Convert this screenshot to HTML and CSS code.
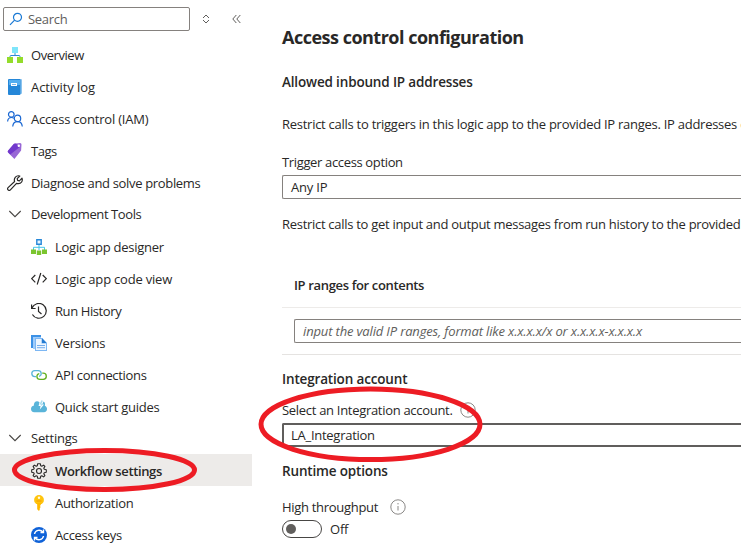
FILE: index.html
```
<!DOCTYPE html>
<html lang="en">
<head>
<meta charset="utf-8">
<title>Workflow settings</title>
<link rel="stylesheet" href="styles.css">
</head>
<body>
<div class="app">
  <aside class="sidebar">
    <div class="toolbar">
      <div class="search">
        <svg width="14" height="14" viewBox="0 0 14 14" fill="none" stroke="#1979d4" stroke-width="1.2"><circle cx="8.5" cy="5.3" r="4"/><path d="M5.6 8.2 1 12.8"/></svg>
        <span>Search</span>
      </div>
      <svg class="sort" width="8" height="10" viewBox="0 0 8 10" fill="none" stroke="#605e5c"><path d="M1 4 4 1l3 3M1 6l3 3 3-3"/></svg>
      <svg class="collapse" width="9" height="10" viewBox="0 0 9 10" fill="none" stroke="#605e5c"><path d="M4.3 1 .8 5l3.5 4M8.3 1 4.8 5l3.5 4"/></svg>
    </div>
    <nav class="menu">
      <div class="item"><svg class="icon" viewBox="0 0 16 16"><path d="M8 6v2.5M3 11V9.5Q3 8.5 4 8.5h8q1 0 1 1V11" fill="none" stroke="#2e8ad8"/><path fill="#7ee5fa" d="M5 0h6v6H5z"/><path fill="#94dc2b" d="M0 10h6v6H0zM10 10h6v6h-6z"/></svg><span class="t-overview">Overview</span></div>
      <div class="item"><svg class="icon" viewBox="0 0 16 16"><rect x="3" width="12" height="15" rx="1" fill="#8cc4ef"/><rect x="1" y="0" width="12.5" height="16" rx="1" fill="#2587d8"/><path fill="#54aef0" d="M2 1h11v5H2z"/><path fill="#fff" d="M4 4h6v3H4z"/><path d="M5 5.5h4" stroke="#77b7eb"/></svg><span class="t-activity">Activity log</span></div>
      <div class="item"><svg class="icon" viewBox="0 0 16 16" fill="none" stroke="#1a67d2" stroke-width="1.2"><circle cx="4.3" cy="3.4" r="2.8"/><path d="M.6 10.5C.8 7.8 2.3 6.5 4.5 6.5q1.4 0 2.4.8"/><circle cx="10.5" cy="7.4" r="3.2"/><path d="M5.7 15.5c.3-3 2.1-4.8 4.8-4.8s4.5 1.8 4.8 4.8"/></svg><span class="t-iam">Access control (IAM)</span></div>
      <div class="item"><svg class="icon" viewBox="0 0 16 16"><path fill="#9867d5" d="M7 .8 13 0q1.6 0 1.5 1.5l-.4 6L7.4 16 1 9.5q-.8-1 .2-2z"/><path fill="#7138cc" d="M7 .8 9 .5l3.5 3.8L3.2 11.5 1 9.2q-.6-.8.2-1.7z"/><circle cx="11.8" cy="2.8" r="1.2" fill="#fff"/></svg><span class="t-tags">Tags</span></div>
      <div class="item"><svg class="icon" viewBox="0 0 16 16" fill="none" stroke="#292827" stroke-width="1.2" stroke-linejoin="round"><path d="M12.8 1 10.2 3.6l.4 1.8 1.8.4L15 3.2c1 2.7-.7 5.5-3.7 5.5-.7 0-1.2-.1-1.8-.3L3.4 14.9c-1.6 1.6-3.9-.8-2.3-2.3l6.5-6.1C6.5 3.1 9.2-.1 12.8 1z"/></svg><span class="t-diagnose">Diagnose and solve problems</span></div>
      <div class="item group"><svg class="icon" viewBox="0 0 16 16" fill="none" stroke="#484644" stroke-width="1.1"><path d="m2.3 5 5.7 5.7L13.7 5"/></svg><span class="t-dev">Development Tools</span></div>
      <div class="item sub"><svg class="icon" viewBox="0 0 16 16"><path d="M8 5v6M2.5 11V8.3h11V11" fill="none" stroke="#45c6e9"/><path d="M5.8.8h4.4v4.4H5.8z" fill="#e9f6ff" stroke="#2788d9" stroke-width="1.4"/><path fill="#7bc52f" d="M0 10.5h5V15H0zM5.8 11.5h4.4V16H5.8zM11 10.5h5V15h-5z"/></svg><span class="t-designer">Logic app designer</span></div>
      <div class="item sub"><svg class="icon" viewBox="0 0 16 16" fill="none" stroke="#292827" stroke-width="1.2"><path d="M4.3 4 .7 7.7l3.6 3.7M11.7 4l3.6 3.7-3.6 3.7M9.8 2 6.2 13.5"/></svg><span class="t-code">Logic app code view</span></div>
      <div class="item sub"><svg class="icon" viewBox="0 0 16 16" fill="none" stroke="#292827" stroke-width="1.2"><path d="M.6 1.5v4h4M1 5A7.4 7.4 0 1 1 1.4 11.5M7.5 3.5v5l3 2.5"/></svg><span class="t-run">Run History</span></div>
      <div class="item sub"><svg class="icon" viewBox="0 0 16 16"><path fill="#3c91e6" d="M0 0h10v13H0z"/><path fill="#a0ccfa" d="M2 2h8v12H2z"/><path fill="#7db7f3" d="M4 3h7l5 5v8H4z"/><path fill="#edf6ff" d="M5 4h5.5v4.5H15V15H5z"/><path fill="#247bd1" d="m11 3 4.5 5H11z"/><path d="M6 10.5h8M6 12.7h8" stroke="#75adec"/></svg><span class="t-versions">Versions</span></div>
      <div class="item sub"><svg class="icon" viewBox="0 0 16 16" fill="none" stroke-width="1.3"><path stroke="#59b4d9" d="M5 9.6H3.8A3 3 0 0 1 3.8 3.6h3.4c3.7 0 4 4.9.8 5.8"/><path stroke="#62af20" d="M11.2 6.2h1a3.1 3.1 0 0 1 0 6.2H9C5 12.4 5 7.3 8.3 6.6"/></svg><span class="t-api">API connections</span></div>
      <div class="item sub"><svg class="icon" viewBox="0 0 16 16"><path fill="#59b4d9" d="M3.3 13.2C-1 13.2-1 7 2.8 6.7 2.6 2.5 6 1 8.5 3.2L7.6 7h2l-.8 3.5L13 5.5h-1.8l1.3-3q2.2 1.2 1.3 4.2c3.3 1 2.8 6.5-.8 6.5z"/><path fill="#a9dcef" d="m10.4 1.2-2 4.4h1.8l-.6 2L12 5.1h-1.6l1.5-3.4z"/></svg><span class="t-quick">Quick start guides</span></div>
      <div class="item group"><svg class="icon" viewBox="0 0 16 16" fill="none" stroke="#484644" stroke-width="1.1"><path d="m2.3 5 5.7 5.7L13.7 5"/></svg><span class="t-settings">Settings</span></div>
      <div class="item sub selected"><svg class="icon" viewBox="0 0 16 16" fill="none" stroke="#292827" stroke-width="1.1" stroke-linejoin="round"><path d="m6.7.7-.4 2-1.1.5-1.8-1.1-1.3 1.3 1.1 1.8-.5 1.1-2 .4v2.6l2 .4.5 1.1-1.1 1.8 1.3 1.3 1.8-1.1 1.1.5.4 2h2.6l.4-2 1.1-.5 1.8 1.1 1.3-1.3-1.1-1.8.5-1.1 2-.4V6.7l-2-.4-.5-1.1 1.1-1.8-1.3-1.3-1.8 1.1-1.1-.5-.4-2z"/><circle cx="8" cy="8" r="2.5"/></svg><span class="t-workflow">Workflow settings</span></div>
      <div class="item sub"><svg class="icon" viewBox="0 0 16 16"><circle cx="8" cy="4.9" r="4.9" fill="#ffc40d"/><path fill="#ffb900" d="M6.2 8h3.6v2l-1 1 1 1-1 1v1.5L8 16l-1.8-1.7z"/><circle cx="8" cy="2.8" r="1.2" fill="#fff8de"/><path d="M5.5 6h5" stroke="#f59a00"/></svg><span class="t-auth">Authorization</span></div>
      <div class="item sub"><svg class="icon" viewBox="0 0 16 16"><circle cx="8" cy="8" r="8" fill="#0f62d8"/><g fill="none" stroke="#fff" stroke-width="1.4"><path d="M3.5 7C4.2 3 9.3 1.8 12 5.2M12.5 9c-.7 4-5.8 5.2-8.5 1.8"/><path d="M12.5 2.5v3h-3M3.5 13.5v-3h3"/></g></svg><span class="t-keys">Access keys</span></div>
    </nav>
  </aside>

  <main class="content">
    <h1><span>Access control configuration</span></h1>
    <h2 class="allowed">Allowed inbound IP addresses</h2>
    <p class="trigger-text">Restrict calls to triggers in this logic app to the provided IP ranges. IP addresses c</p>
    <label class="trigger-label">Trigger access option</label>
    <div class="field">Any IP</div>
    <p class="history-text">Restrict calls to get input and output messages from run history to the provided</p>
    <section class="ranges">
      <h3>IP ranges for contents</h3>
      <div class="range-row"><div class="field placeholder">input the valid IP ranges, format like x.x.x.x/x or x.x.x.x-x.x.x.x</div></div>
    </section>
    <h2 class="integration">Integration account</h2>
    <div class="label-row account-label"><span>Select an Integration account.</span><svg class="info" viewBox="0 0 16 16"><circle cx="8" cy="8" r="7.2" fill="none" stroke="#8a8886"/><path d="M8 7v4.5M8 4v1.4" stroke="#8a8886"/></svg></div>
    <div class="field focused">LA_Integration</div>
    <h2 class="runtime">Runtime options</h2>
    <div class="label-row throughput"><span>High throughput</span><svg class="info" viewBox="0 0 16 16"><circle cx="8" cy="8" r="7.2" fill="none" stroke="#8a8886"/><path d="M8 7v4.5M8 4v1.4" stroke="#8a8886"/></svg></div>
    <div class="switch-row"><div class="switch"><i></i></div><span>Off</span></div>
  </main>
  <svg class="annotations" viewBox="0 0 741 549" fill="none" stroke="#ed1c24" stroke-width="5"><ellipse cx="104.5" cy="470" rx="90" ry="19.5"/><ellipse cx="370.5" cy="424.3" rx="109.5" ry="35.3"/></svg>
</div>
</body>
</html>
```
FILE: styles.css
```
* { box-sizing: border-box; }
body { margin: 0; background: #fff; color: #292827; font: 13px/20px "Open Sans", "Noto Sans", sans-serif; letter-spacing: -.2px; }
.app { position: relative; display: flex; width: 741px; height: 549px; overflow: hidden; }
.sidebar { flex: none; width: 252px; }
.toolbar { display: flex; align-items: center; height: 38px; padding-left: 3px; }
.search { display: flex; align-items: center; width: 187px; height: 24px; padding-left: 5px; gap: 5px; border: 1px solid #85817e; border-radius: 2px; color: #605e5c; letter-spacing: -.3px; }
.sort { margin-left: 12px; }
.collapse { margin-left: 22px; }
.item { display: flex; align-items: center; height: 32px; padding-left: 7px; gap: 8px; white-space: nowrap; }
.item span { padding-top: 2px; }
.item .icon { flex: none; width: 16px; height: 16px; margin-top: 2px; }
.group span, .group .icon { position: relative; top: -1px; }
.sub { padding-left: 31px; }
.selected { background: #edebe9; font-weight: 600; }
.t-overview { letter-spacing: -.45px; }
.t-dev { letter-spacing: -.4px; }
.t-diagnose { letter-spacing: -.34px; }
.t-activity { letter-spacing: -.08px; }
.t-tags { letter-spacing: -.5px; }
.t-designer, .t-quick { letter-spacing: -.25px; }
.t-workflow { letter-spacing: -.36px; }
.t-api { letter-spacing: -.33px; }
.t-run { letter-spacing: -.4px; }
.t-auth { letter-spacing: -.3px; }
.t-keys { letter-spacing: -.35px; }
.content { flex: 1; min-width: 0; padding: 25px 0 0 30px; white-space: nowrap; }
h1, h2, h3, p { margin: 0; font-size: 13px; line-height: 20px; }
h2, h3 { font-weight: 600; }
h2 { font-size: 13.5px; letter-spacing: -.16px; }
h3 { letter-spacing: -.35px; }
p { font-weight: 400; }
h1 { font-size: 18px; line-height: 24px; font-weight: 700; letter-spacing: -.5px; }
label { display: block; letter-spacing: -.35px; }
.allowed { margin-top: 23px; }
.trigger-text { margin-top: 22px; letter-spacing: -.265px; }
.trigger-label { margin-top: 18px; }
.field { height: 24px; line-height: 22px; margin-top: 3px; padding-left: 8px; border: 1px solid #85817e; border-right: 0; border-radius: 2px 0 0 2px; }
.history-text { margin-top: 15px; letter-spacing: -.29px; }
.ranges { margin-top: 41px; }
.ranges h3 { padding-left: 12px; height: 33px; border-bottom: 1px solid #edebe9; }
.range-row { height: 47px; padding: 11px 0 0 12px; border-bottom: 1px solid #e5e3e1; }
.range-row .field { margin-top: 0; }
.placeholder { color: #605e5c; font-style: italic; letter-spacing: -.155px; }
.integration { margin-top: 14px; }
.label-row { display: flex; align-items: center; height: 20px; letter-spacing: -.3px; }
.info { width: 16px; height: 16px; }
.account-label { margin-top: 11px; gap: 8px; }
.account-label span { width: 170px; }
.focused { border: 2px solid #605e5c; border-right: 0; line-height: 20px; padding-left: 7px; letter-spacing: -.27px; }
.runtime { margin-top: 14px; }
.throughput { margin-top: 16px; gap: 11px; }
.throughput span { width: 97px; }
.switch-row { display: flex; align-items: center; gap: 8px; height: 18px; margin-top: 3px; }
.switch { display: flex; align-items: center; width: 40px; height: 18px; padding-left: 3px; border: 1px solid #484644; border-radius: 9px; }
.switch i { width: 10px; height: 10px; border-radius: 50%; background: #605e5c; }
.annotations { position: absolute; left: 0; top: 0; width: 741px; height: 549px; }
```
